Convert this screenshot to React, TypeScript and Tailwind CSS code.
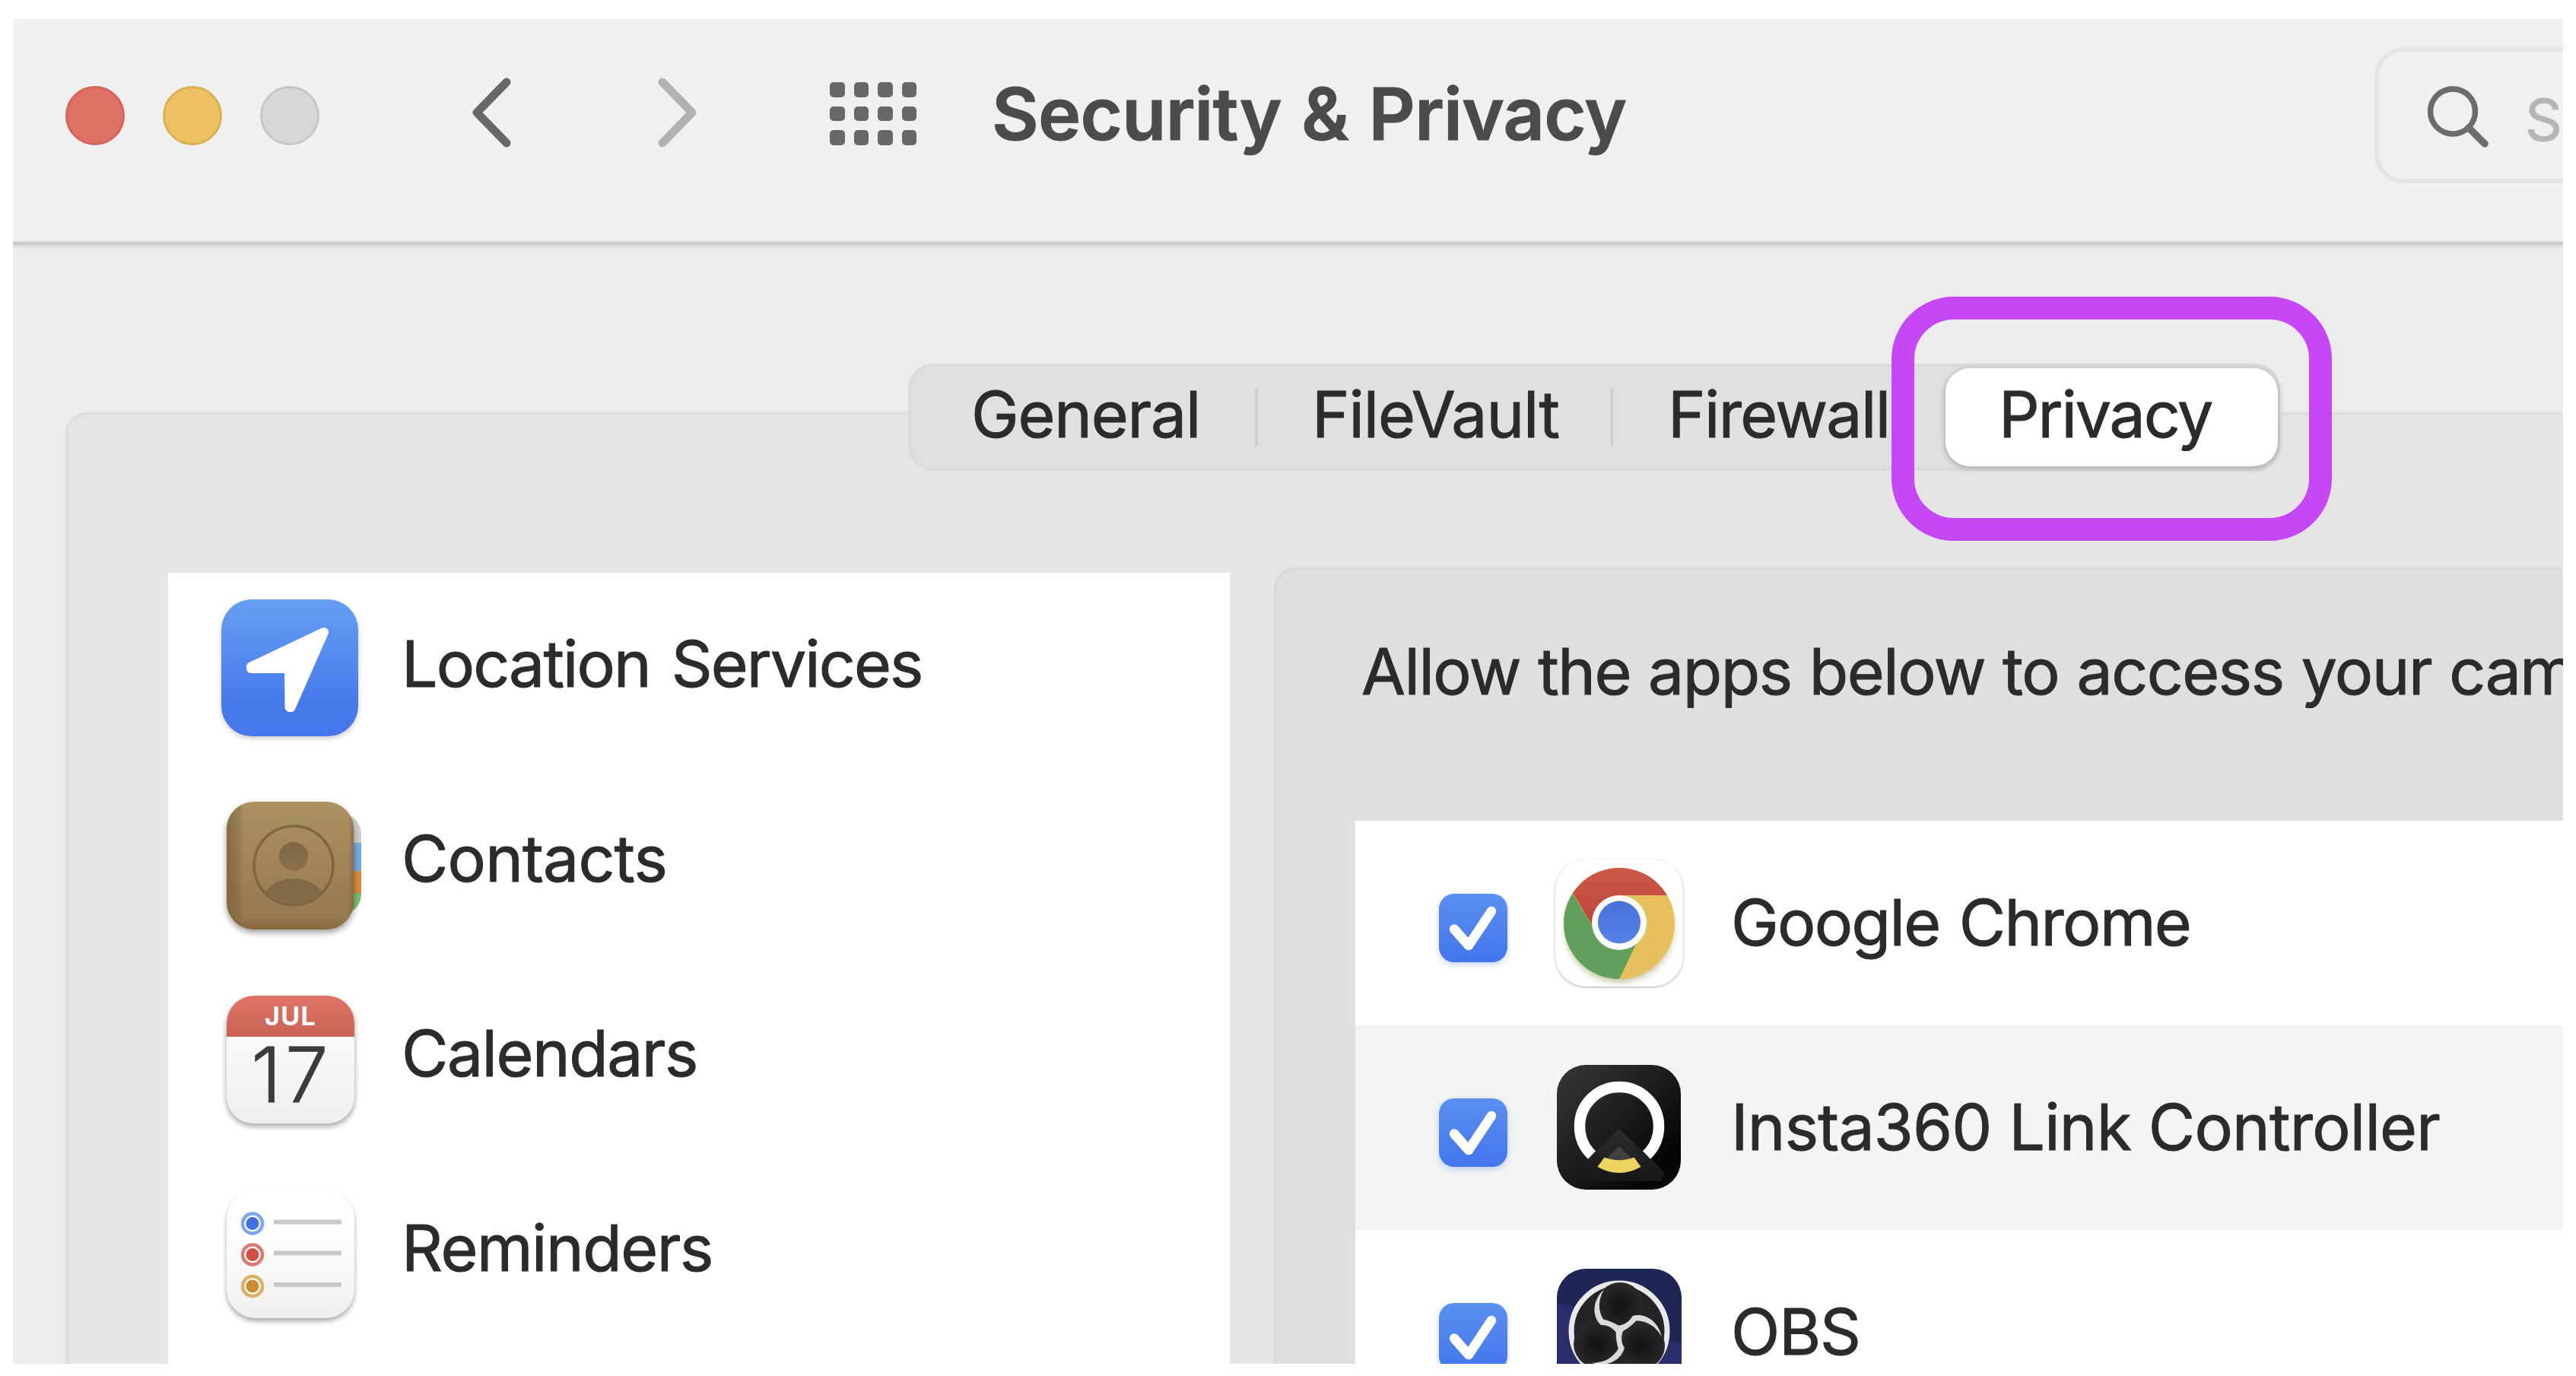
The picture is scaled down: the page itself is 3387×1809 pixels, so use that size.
import type { ReactNode } from "react";

function TrafficLights() {
  return (
    <div className="flex gap-[50px]">
      <span className="size-[78px] rounded-full border-[3px] border-[#d5645a] bg-[#dd7165]" />
      <span className="size-[78px] rounded-full border-[3px] border-[#dcb052] bg-[#ebc161]" />
      <span className="size-[78px] rounded-full border-[3px] border-[#c5c7c6] bg-[#d6d7d7]" />
    </div>
  );
}

function Chevron({ dir, className }: { dir: "left" | "right"; className: string }) {
  return (
    <svg viewBox="0 0 56 96" className={`h-[96px] w-[56px] ${className}`} fill="none" stroke="currentColor" strokeWidth="11" strokeLinecap="round" strokeLinejoin="round">
      {dir === "left" ? <path d="M48 8 9 48l39 40" /> : <path d="M8 8l39 40L8 88" />}
    </svg>
  );
}

function Toolbar() {
  return (
    <header className="flex h-[293px] shrink-0 items-start bg-[#eff1f0]">
      <div className="pt-[88px] pl-[69px]">
        <TrafficLights />
      </div>
      <div className="flex gap-[189px] pt-[75px] pl-[198px]">
        <Chevron dir="left" className="text-[#666968]" />
        <Chevron dir="right" className="text-[#b0b2b1]" />
      </div>
      <div className="grid grid-cols-4 gap-[12px] pt-[83px] pl-[172px]">
        {Array.from({ length: 12 }, (_, i) => (
          <span key={i} className="size-[19.5px] rounded-[5px] bg-[#666968]" />
        ))}
      </div>
      <h1 className="pt-[67px] pl-[99px] text-[95px] leading-[115px] font-semibold tracking-[-0.7px] whitespace-nowrap text-[#4a4c4b] [-webkit-text-stroke:1px_#4a4c4b] [word-spacing:3px]">
        Security &amp; Privacy
      </h1>
      <div className="mt-[37px] ml-auto flex h-[179px] w-[248px] shrink-0 rounded-l-[38px] border-[6px] border-r-0 border-[#e3e4e3]">
        <svg viewBox="0 0 84 84" className="mt-[42px] ml-[61px] size-[84px] shrink-0" fill="none" stroke="#6b6d6c" strokeLinecap="round">
          <circle cx="36" cy="36.500" r="29.500" strokeWidth="7.500" />
          <path d="M57 58l21 21" strokeWidth="9.500" />
        </svg>
        <span className="mt-[43px] ml-[47px] text-[76px] leading-[92px] text-[#b4b6b5] [-webkit-text-stroke:1px_#b4b6b5]">S</span>
      </div>
    </header>
  );
}

function Tabs() {
  const tab = "flex h-full items-center pb-[7px]";
  const sep = "h-[77px] w-[4px] shrink-0 bg-[#cfcfcf]";
  return (
    <nav className="flex h-[141px] w-[1804px] items-center rounded-[34px] bg-[#e0e0e0] shadow-[inset_0_0_5px_3px_#d8d8d8]">
      <div className={`${tab} w-[456px] pl-[83px] tracking-[-1.17px]`}>General</div>
      <span className={sep} />
      <div className={`${tab} w-[463px] pl-[71px] tracking-[-1.07px]`}>FileVault</div>
      <span className={sep} />
      <div className={`${tab} w-[437px] pl-[72px] tracking-[-1.6px]`}>Firewall</div>
      <div className="flex h-[129px] w-[437px] items-center rounded-[32px] bg-white pb-[7px] pl-[70px] tracking-[-2.04px] shadow-[0_2px_6px_2px_#b4b4b4]">
        Privacy
      </div>
    </nav>
  );
}

function LocationIcon() {
  return (
    <svg viewBox="0 0 180 180" className="-mt-[6px] ml-[-7px] size-[180px] overflow-visible [filter:drop-shadow(0_3px_3px_#0003)]">
      <defs>
        <linearGradient id="loc" x1="0" y1="0" x2="0" y2="1">
          <stop offset="0" stopColor="#66a0f2" />
          <stop offset="0.75" stopColor="#467aec" />
          <stop offset="1" stopColor="#4576eb" />
        </linearGradient>
      </defs>
      <rect width="180" height="180" rx="40" fill="url(#loc)" />
      <path d="M135 43 39 88.500 39 91 89 91 89.500 142 91.500 142Z" fill="#fff" stroke="#fff" strokeWidth="12" strokeLinejoin="round" />
    </svg>
  );
}

function ContactsIcon() {
  return (
    <svg viewBox="0 0 180 180" className="mt-[2px] ml-[-7px] size-[180px] overflow-visible">
      <defs>
        <linearGradient id="book" x1="0" y1="0" x2="0" y2="1">
          <stop offset="0" stopColor="#ae9463" />
          <stop offset="0.1" stopColor="#a88f5f" />
          <stop offset="0.9" stopColor="#977a50" />
          <stop offset="1" stopColor="#86693f" />
        </linearGradient>
        <linearGradient id="spine" x1="0" y1="0" x2="1" y2="0">
          <stop offset="0" stopColor="#6d5431" stopOpacity="0.55" />
          <stop offset="0.1" stopColor="#6d5431" stopOpacity="0.25" />
          <stop offset="0.13" stopColor="#6d5431" stopOpacity="0" />
          <stop offset="0.96" stopColor="#6d5431" stopOpacity="0" />
          <stop offset="1" stopColor="#6d5431" stopOpacity="0.5" />
        </linearGradient>
        <linearGradient id="emb" x1="0" y1="0" x2="0" y2="1">
          <stop offset="0" stopColor="#7f6844" />
          <stop offset="1" stopColor="#8b704a" />
        </linearGradient>
        <clipPath id="tabs">
          <rect x="120" y="22" width="64" height="132" rx="26" />
        </clipPath>
        <clipPath id="face">
          <circle cx="95" cy="90" r="51" />
        </clipPath>
      </defs>
      <g clipPath="url(#tabs)">
        <rect x="120" y="10" width="64" height="53" fill="#cfcfcd" />
        <rect x="120" y="60" width="64" height="37" fill="#72aee6" />
        <rect x="120" y="97" width="64" height="29" fill="#dd8b3c" />
        <rect x="120" y="126" width="64" height="34" fill="#7cc074" />
      </g>
      <rect x="7" y="6" width="167" height="168" rx="36" fill="url(#book)" className="[filter:drop-shadow(0_4px_4px_#0006)]" />
      <rect x="7" y="6" width="167" height="168" rx="36" fill="url(#spine)" />
      <circle cx="95" cy="90" r="52" fill="none" stroke="#7d6743" strokeWidth="3.500" />
      <circle cx="95" cy="78" r="19" fill="url(#emb)" />
      <ellipse cx="95" cy="142" rx="43" ry="35" fill="url(#emb)" clipPath="url(#face)" />
    </svg>
  );
}

function CalendarIcon() {
  return (
    <div className="flex size-[168px] flex-col items-center overflow-hidden rounded-[36px] bg-gradient-to-b from-white to-[#efeeed] shadow-[0_4px_6px_1px_#0000004d]">
      <div className="flex h-[54px] w-full shrink-0 items-center justify-center bg-gradient-to-b from-[#df7466] to-[#c96457] text-[34px] font-bold tracking-[1.4px] text-white [-webkit-text-stroke:0px]">
        JUL
      </div>
      <div className="pl-[3px] text-[101px] leading-[98px] font-light tracking-[5px] text-[#3b3b3c] [-webkit-text-stroke:1px_#3b3b3c]">17</div>
    </div>
  );
}

function RemindersIcon() {
  return (
    <svg viewBox="0 0 168 168" className="size-[168px] overflow-visible">
      <defs>
        <linearGradient id="rem" x1="0" y1="0" x2="0" y2="1">
          <stop offset="0.3" stopColor="#fff" />
          <stop offset="1" stopColor="#f0efee" />
        </linearGradient>
      </defs>
      <rect width="168" height="168" rx="38" fill="url(#rem)" className="[filter:drop-shadow(0_4px_3px_#0005)]" />
      {[
        ["#7ea6ee", "#3f6fe0", 43.5],
        ["#dd7a72", "#cf4f42", 84.5],
        ["#dcb066", "#cf8a32", 126],
      ].map(([ring, dot, y]) => (
        <g key={y}>
          <circle cx="34" cy={y} r="13" fill="#fff" stroke={String(ring)} strokeWidth="4.500" />
          <circle cx="34" cy={y} r="8.500" fill={String(dot)} />
          <rect x="62" y={Number(y) - 5} width="89" height="6" fill="#c7c8ca" />
        </g>
      ))}
    </svg>
  );
}

function ServiceRow({ icon, children, track }: { icon: ReactNode; children: string; track: string }) {
  return (
    <li className="flex h-[256px] items-center">
      <div className="w-[229px] shrink-0 pl-[77px]">{icon}</div>
      <span className={`-mt-[16px] pl-[78px] whitespace-nowrap ${track}`}>{children}</span>
    </li>
  );
}

function Checkbox() {
  return (
    <svg viewBox="0 0 90 90" className="mt-[13px] size-[90px] shrink-0 overflow-visible [filter:drop-shadow(0_3px_4px_#4a7cee55)]">
      <defs>
        <linearGradient id="chk" x1="0" y1="0" x2="0" y2="1">
          <stop offset="0" stopColor="#5b90f0" />
          <stop offset="1" stopColor="#4375ec" />
        </linearGradient>
      </defs>
      <rect width="90" height="90" rx="20" fill="url(#chk)" />
      <path d="M20 46.500 39 68 69 23" fill="none" stroke="#fff" strokeWidth="12.500" strokeLinecap="round" strokeLinejoin="round" />
    </svg>
  );
}

function ChromeIcon() {
  return (
    <svg viewBox="0 0 170 170" className="-mt-[2px] size-[170px] overflow-visible">
      <defs>
        <linearGradient id="cr" x1="0" y1="0" x2="0" y2="1">
          <stop offset="0" stopColor="#cf5a48" />
          <stop offset="1" stopColor="#b94738" />
        </linearGradient>
        <linearGradient id="cb" x1="0" y1="0" x2="0" y2="1">
          <stop offset="0" stopColor="#4a73da" />
          <stop offset="1" stopColor="#5580e6" />
        </linearGradient>
        <clipPath id="disc">
          <circle cx="85" cy="86" r="73" />
        </clipPath>
      </defs>
      <rect x="1" y="2" width="168" height="167" rx="40" fill="#fff" className="[filter:drop-shadow(0_1.5px_1.5px_#0005)]" />
      <circle cx="85" cy="88" r="71" fill="#d9a240" className="[filter:drop-shadow(0_4px_5px_#8a8a4a88)]" />
      <g clipPath="url(#disc)">
        <rect width="170" height="170" fill="#e8bf5d" />
        <path d="M85 49H160V0H0V20L26 49 51 91 85 83Z" fill="url(#cr)" />
        <path d="M26 50 0 20V170H80L113 101 85 83 53 95Z" fill="#61a05c" />
        <path d="M84 160 85 156 114 100 85 83 60 120 60 160Z" fill="#61a05c" />
      </g>
      <circle cx="85" cy="85" r="36" fill="#fbfbfb" />
      <circle cx="85" cy="84.500" r="28" fill="url(#cb)" />
    </svg>
  );
}

function InstaIcon() {
  return (
    <svg viewBox="0 0 170 170" className="-mt-[2px] size-[170px]">
      <defs>
        <linearGradient id="ins" x1="0" y1="0" x2="1" y2="1">
          <stop offset="0" stopColor="#373737" />
          <stop offset="0.5" stopColor="#1b1b1b" />
          <stop offset="0.85" stopColor="#030303" />
          <stop offset="1" stopColor="#111" />
        </linearGradient>
        <linearGradient id="beam" x1="0" y1="0" x2="0" y2="1">
          <stop offset="0" stopColor="#2d2d2d" />
          <stop offset="1" stopColor="#161616" />
        </linearGradient>
      </defs>
      <rect x="3" y="3" width="163" height="164" rx="38" fill="url(#ins)" />
      <path d="M85 87 142 142Q148 150 138 156H32Q22 150 28 142Z" fill="url(#beam)" />
      <path d="M85 110 104 128H66Z" fill="#404040" />
      <path d="M49 121.500A52 52 0 1 1 121 121.500" fill="none" stroke="#fff" strokeWidth="14.500" />
      <path d="M65.500 124.500Q85 132 104.500 124.500L113.500 137Q85 153 56.500 137Z" fill="#edd35f" />
    </svg>
  );
}

function ObsIcon() {
  return (
    <svg viewBox="0 0 170 170" className="-mt-[4px] size-[170px]">
      <defs>
        <radialGradient id="lobe">
          <stop offset="0" stopColor="#121214" />
          <stop offset="1" stopColor="#29292c" />
        </radialGradient>
        <clipPath id="obsr">
          <rect x="3" y="3" width="164" height="164" rx="38" />
        </clipPath>
      </defs>
      <g clipPath="url(#obsr)">
        <rect width="170" height="170" fill="#1e2655" />
        <path d="M0 46Q30 58 50 50V170H0Z" fill="#2a2d6c" />
        <path d="M170 98Q150 104 130 90V170H170Z" fill="#2a2d6c" />
        <path d="M170 151Q150 152 138 160V170H170Z" fill="#0f1430" />
      </g>
      <circle cx="85" cy="85" r="63" fill="#242427" stroke="#e9e9ea" strokeWidth="7" />
      <circle cx="86" cy="52" r="31" fill="url(#lobe)" />
      <circle cx="56" cy="102" r="31" fill="url(#lobe)" />
      <circle cx="114" cy="104" r="31" fill="url(#lobe)" />
      {[0, 120, 240].map((a) => (
        <path key={a} transform={`rotate(${a} 85 83)`} d="M65 30C48 46 50 67 61 77C70 76 78 82 82 88L89 81C81 75 74 72 64 69.500C57 58 57 44 65 30Z" fill="#dadadb" />
      ))}
    </svg>
  );
}

function AppRow({ icon, children, className }: { icon: ReactNode; children: string; className: string }) {
  return (
    <li className={`flex h-[269px] items-center pl-[110px] whitespace-nowrap ${className}`}>
      <Checkbox />
      <div className="ml-[62px] shrink-0">{icon}</div>
      <span className="-mt-[2px] ml-[62px]">{children}</span>
    </li>
  );
}

export default function App() {
  return (
    <div className="h-[1809px] w-[3387px] overflow-hidden bg-white pt-[25px] pl-[17px] font-['Inter',sans-serif]">
      <main className="relative flex h-[1768px] w-[3353px] flex-col overflow-hidden bg-[#ececec] text-[84px] leading-[102px] text-[#2a2b2b] [-webkit-text-stroke:1px_#2a2b2b]">
        <Toolbar />
        <div className="h-[4px] shrink-0 bg-[#c9cac9] shadow-[0_2px_4px_#d2d2d2,0_-1px_2px_#dfe0df]" />
        <section className="mt-[220px] ml-[69px] h-[1400px] w-[3320px] shrink-0 rounded-tl-[28px] border-[4px] border-[#dedede] bg-[#e5e5e5]">
          <div className="-mt-[68px] ml-[1104px]">
            <Tabs />
          </div>
          <div className="mt-[127px] ml-[131px] flex items-start">
            <ul className="mt-[7px] h-[1200px] w-[1396px] shrink-0 bg-white">
              <ServiceRow icon={<LocationIcon />} track="tracking-[-1.85px] [word-spacing:6px]">Location Services</ServiceRow>
              <ServiceRow icon={<ContactsIcon />} track="tracking-[-0.8px]">Contacts</ServiceRow>
              <ServiceRow icon={<CalendarIcon />} track="tracking-[-1.46px]">Calendars</ServiceRow>
              <ServiceRow icon={<RemindersIcon />} track="tracking-[-1.42px]">Reminders</ServiceRow>
            </ul>
            <div className="ml-[58px] h-[1200px] w-[1800px] shrink-0 rounded-tl-[28px] border-[4px] border-[#d9d9d9] bg-[#dfdfdf]">
              <p className="mt-[82px] ml-[111px] tracking-[-1.45px] whitespace-nowrap [word-spacing:1px]">Allow the apps below to access your cam</p>
              <ul className="mt-[145px] ml-[103px] bg-white">
                <AppRow icon={<ChromeIcon />} className="tracking-[-1.6px] [word-spacing:3px]">Google Chrome</AppRow>
                <AppRow icon={<InstaIcon />} className="bg-[#f3f5f4] tracking-[-0.75px]">Insta360 Link Controller</AppRow>
                <AppRow icon={<ObsIcon />} className="tracking-[-1.1px]">OBS</AppRow>
              </ul>
            </div>
          </div>
        </section>
        <div className="absolute top-[365px] left-[2470px] h-[321px] w-[579px] rounded-[82px] border-[30px] border-[#c547f6]" />
      </main>
    </div>
  );
}
